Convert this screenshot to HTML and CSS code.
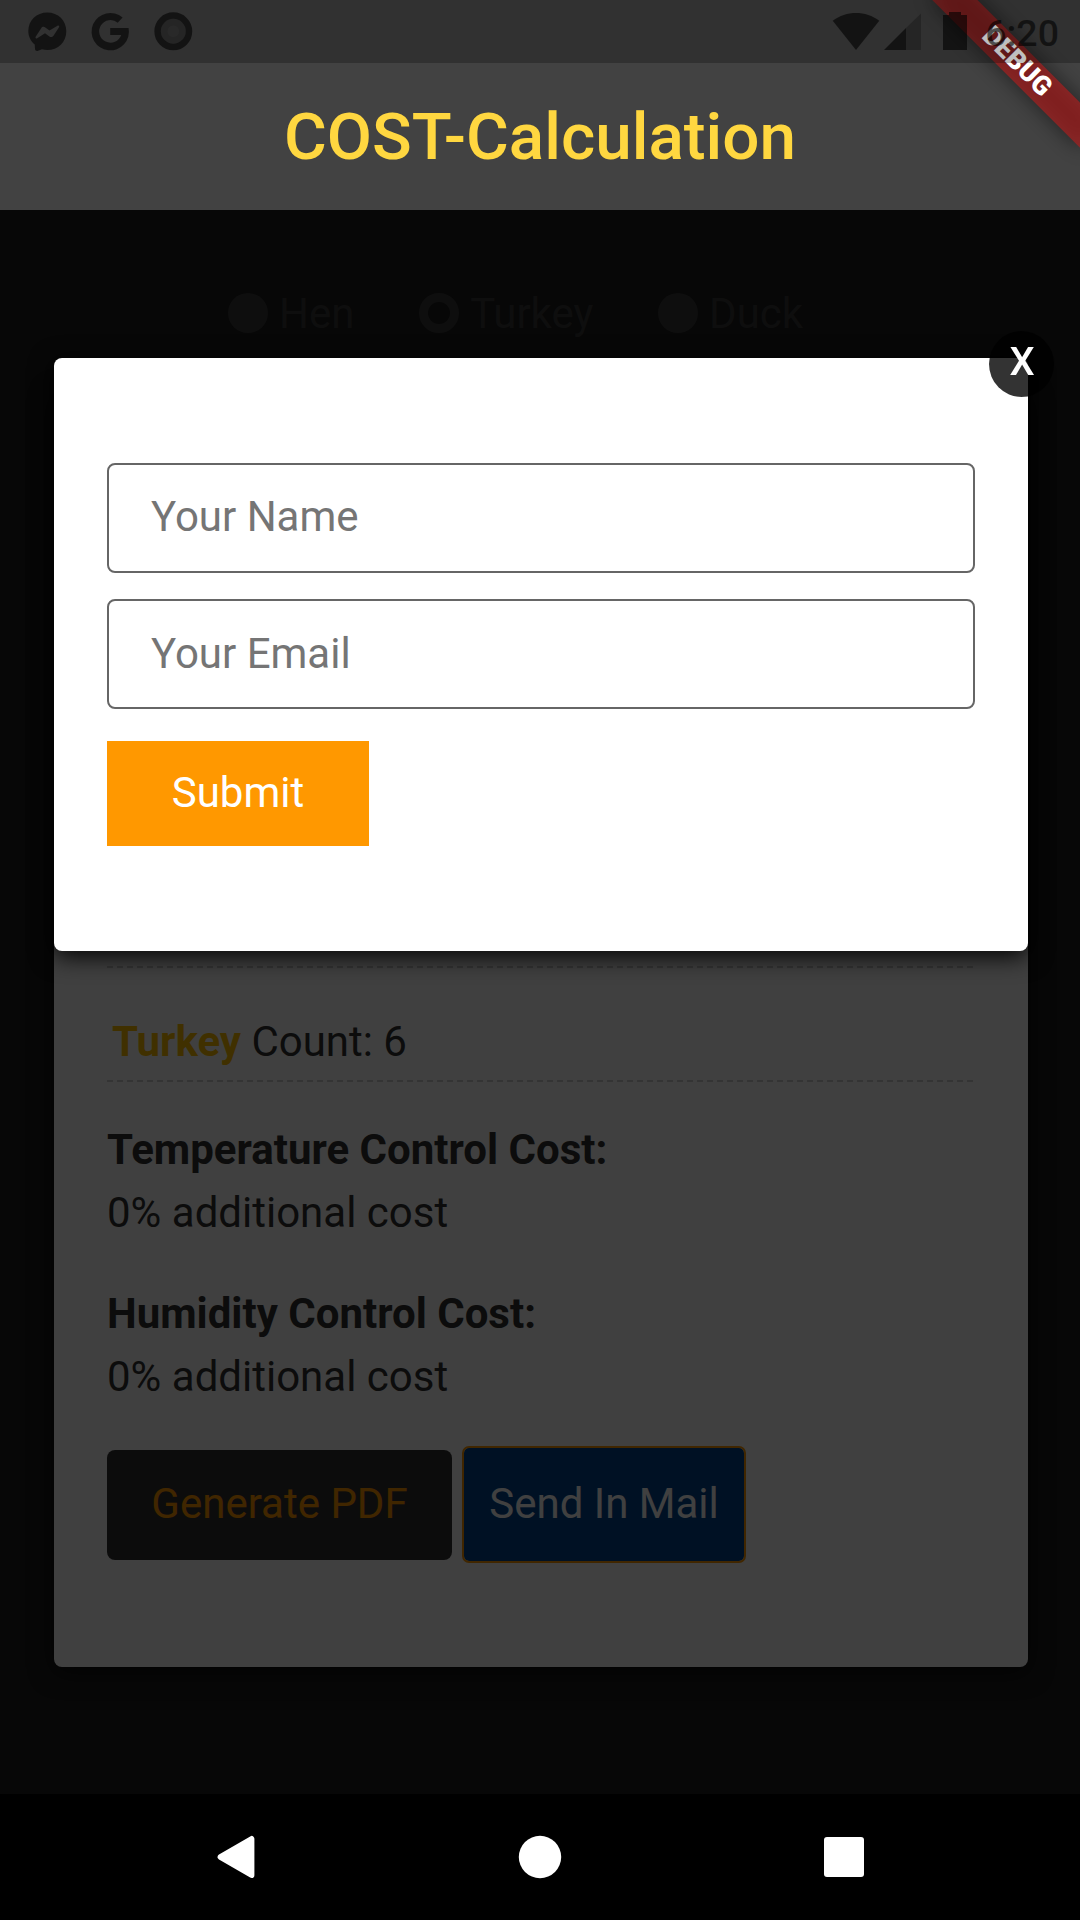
FILE: index.html
```html
<!DOCTYPE html>
<html lang="en">
<head>
<meta charset="utf-8">
<title>COST-Calculation</title>
<link rel="stylesheet" href="styles.css">
</head>
<body>
<div class="screen">
  <header class="appbar"><h1 class="title">COST-Calculation</h1></header>

  <main class="page">
    <div class="species">
      <span class="option"><i class="radio"></i>Hen</span>
      <span class="option"><i class="radio checked"></i>Turkey</span>
      <span class="option"><i class="radio"></i>Duck</span>
    </div>
    <section class="card">
      <div class="divider"></div>
      <p class="count"><b>Turkey</b> Count: 6</p>
      <div class="divider"></div>
      <div class="cost"><h2>Temperature Control Cost:</h2><p>0% additional cost</p></div>
      <div class="cost"><h2>Humidity Control Cost:</h2><p>0% additional cost</p></div>
      <div class="actions">
        <div class="btn pdf">Generate PDF</div>
        <div class="btn mail">Send In Mail</div>
      </div>
    </section>

    <div class="backdrop">
      <form class="modal">
        <input class="field" type="text" placeholder="Your Name">
        <input class="field email" type="text" placeholder="Your Email">
        <div class="submit">Submit</div>
        <div class="close"><span class="cross">X</span></div>
      </form>
    </div>
  </main>

  <nav class="navbar">
    <svg width="48" height="48" viewBox="0 0 48 48"><path d="M39.600 5.800V42.200L8.400 24Z" fill="#fff" stroke="#fff" stroke-width="5.600" stroke-linejoin="round"/></svg>
    <svg width="48" height="48" viewBox="0 0 48 48"><circle cx="24" cy="24" r="21.200" fill="#fff"/></svg>
    <svg width="48" height="48" viewBox="0 0 48 48"><rect x="4" y="4" width="40" height="40" rx="3" fill="#fff"/></svg>
  </nav>

  <div class="corner"><div class="ribbon"><span>DEBUG</span></div></div>

  <div class="statusbar">
    <svg class="notif" width="165" height="63" viewBox="28 0 165 63">
      <path fill-rule="evenodd" d="M47.300 12.500C36.500 12.500 28.300 20.300 28.300 31C28.300 36.500 30.700 41.200 34.700 44.500L35 49C35.100 50.700 36.700 51.500 38.100 50.700L42 49.300C43.700 49.700 45.400 50 47.300 50C58.200 50 66.300 42 66.300 31.200C66.300 20.300 58.200 12.500 47.300 12.500ZM35.700 36.700L41.200 28.200C42.100 26.700 44 26.400 45.300 27.400L49.500 30.500L57.500 25.700C58.700 25 59.700 26 59 27.200L53.500 35.700C52.500 37.200 50.700 37.500 49.400 36.500L45 33.300L37.200 38.200C36 38.900 35 37.900 35.700 36.700Z"/>
      <path d="M128.700 28V35H121.200A11.300 11.300 0 1 1 117.700 22.700L122.600 17.600A18.700 18.700 0 1 0 128.600 28H110.200V35H128.700Z"/>
      <circle class="faint" cx="173.300" cy="31.300" r="12.500"/>
      <circle class="dot" cx="173.300" cy="31.300" r="6"/>
      <circle class="ring" cx="173.300" cy="31.300" r="15.700"/>
    </svg>
    <svg class="system" width="140" height="63" viewBox="832 0 140 63">
      <path d="M832.700 20.700C846 10.300 866 10.300 879.300 20.700L856 50Z"/>
      <path class="weak" d="M906 28V50H921V13.500Z"/>
      <path d="M884 50H906V28Z"/>
      <path d="M943 50V15H949V12H961V15H967V50Z"/>
    </svg>
    <span class="clock">6:20</span>
  </div>
</div>
</body>
</html>
```
FILE: styles.css
```css
* { box-sizing: border-box; margin: 0; padding: 0; }
body { background: #000; font: 42px/63px Roboto, sans-serif; color: #333; }
.screen { position: relative; display: flex; flex-direction: column; width: 1080px; height: 1920px; overflow: hidden; }

.appbar { display: flex; align-items: center; justify-content: center; height: 210px; padding-top: 63px; background: #424242; }
.title { font-size: 65.600px; line-height: 76px; font-weight: 500; color: #ffd740; }

.statusbar { position: absolute; inset: 0 0 auto 0; height: 63px; padding: 0 21px 0 28px; display: flex; align-items: center; background: rgba(0, 0, 0, .25); fill: rgba(0, 0, 0, .6); }
.system { margin-left: auto; }
.weak, .faint { fill: rgba(0, 0, 0, .24); }
.dot { fill: rgba(255, 255, 255, .02); }
.ring { fill: none; stroke: rgba(0, 0, 0, .6); stroke-width: 6.500px; }
.clock { width: 87px; padding-top: 3px; text-align: right; font-size: 37.500px; font-weight: 500; color: rgba(0, 0, 0, .6); }

.corner { position: absolute; top: 0; right: 0; width: 260px; height: 210px; overflow: hidden; }
.ribbon { position: absolute; left: 92px; top: 46px; width: 210px; height: 31.500px; transform: rotate(45deg); }
.ribbon::before { content: ""; position: absolute; inset: 0; background: rgba(0, 0, 0, .5); filter: blur(10.400px); }
.ribbon span { position: absolute; inset: 0; background: rgba(183, 28, 28, .627); color: #fff; font-size: 26.800px; font-weight: 900; line-height: 31.500px; text-align: center; }

.page { position: relative; flex: 1; display: flex; flex-direction: column; padding: 72px 52px 127px 54px; background: #1c1c1c; }
.species { display: flex; gap: 64.700px; height: 62px; padding-left: 174px; color: #3a3a3a; }
.option { display: flex; align-items: center; gap: 11px; }
.radio { width: 40px; height: 40px; border-radius: 50%; background: #3a3a3a; }
.radio.checked { background: none; border: 9.500px solid #3a3a3a; }
.card { flex: 1; margin-top: 46px; padding: 0 53px 106px; display: flex; flex-direction: column; justify-content: flex-end; background: #fff; border-radius: 8px; box-shadow: 0 5px 24px rgba(0, 0, 0, .7); }
.divider { height: 2px; background: repeating-linear-gradient(90deg, #d0d0d0 0 6px, transparent 6px 10px); }
.count { margin: 42px 0 7px 5px; }
.count b { color: #ffc000; }
.cost { margin-top: 38px; }
.divider + .cost { margin-top: 36px; }
.cost h2 { font-size: 42px; font-weight: 700; }
.actions { display: flex; align-items: center; gap: 12px; margin-top: 40px; }
.btn { height: 110px; line-height: 107px; text-align: center; border-radius: 8px; }
.pdf { width: 345px; background: #333; color: #ff9800; }
.mail { width: 280px; height: 113px; line-height: 111px; border-radius: 5px; background: #004490; color: #fff; outline: 2px solid #ff9800; }

.backdrop { position: absolute; inset: 0; padding: 148px 52px 0 54px; background: rgba(0, 0, 0, .75); }
.modal { position: relative; display: flex; flex-direction: column; align-items: flex-start; height: 593px; padding: 105px 53px; background: #fff; border-radius: 8px; box-shadow: 0 5px 24px #000; }
.field { width: 100%; height: 110px; margin-bottom: 26px; padding: 0 42px 4px; border: 2px solid #666; border-radius: 8px; background: #fff; font: 42px Roboto, sans-serif; }
.field.email { padding-bottom: 2px; }
.field::placeholder { color: #757575; }
.submit { width: 262px; height: 105px; margin-top: 6px; line-height: 104px; text-align: center; background: #ff9800; color: #fff; }
.close { position: absolute; left: 935px; top: -27px; width: 65px; height: 66px; border-radius: 50%; background: rgba(0, 0, 0, .8); color: #fff; font-size: 38px; font-weight: 500; line-height: 62px; text-align: center; }
.cross { display: inline-block; transform: scaleX(1.05); }

.navbar { display: flex; align-items: center; justify-content: space-between; height: 126px; padding: 0 212px; background: #000; }
```
